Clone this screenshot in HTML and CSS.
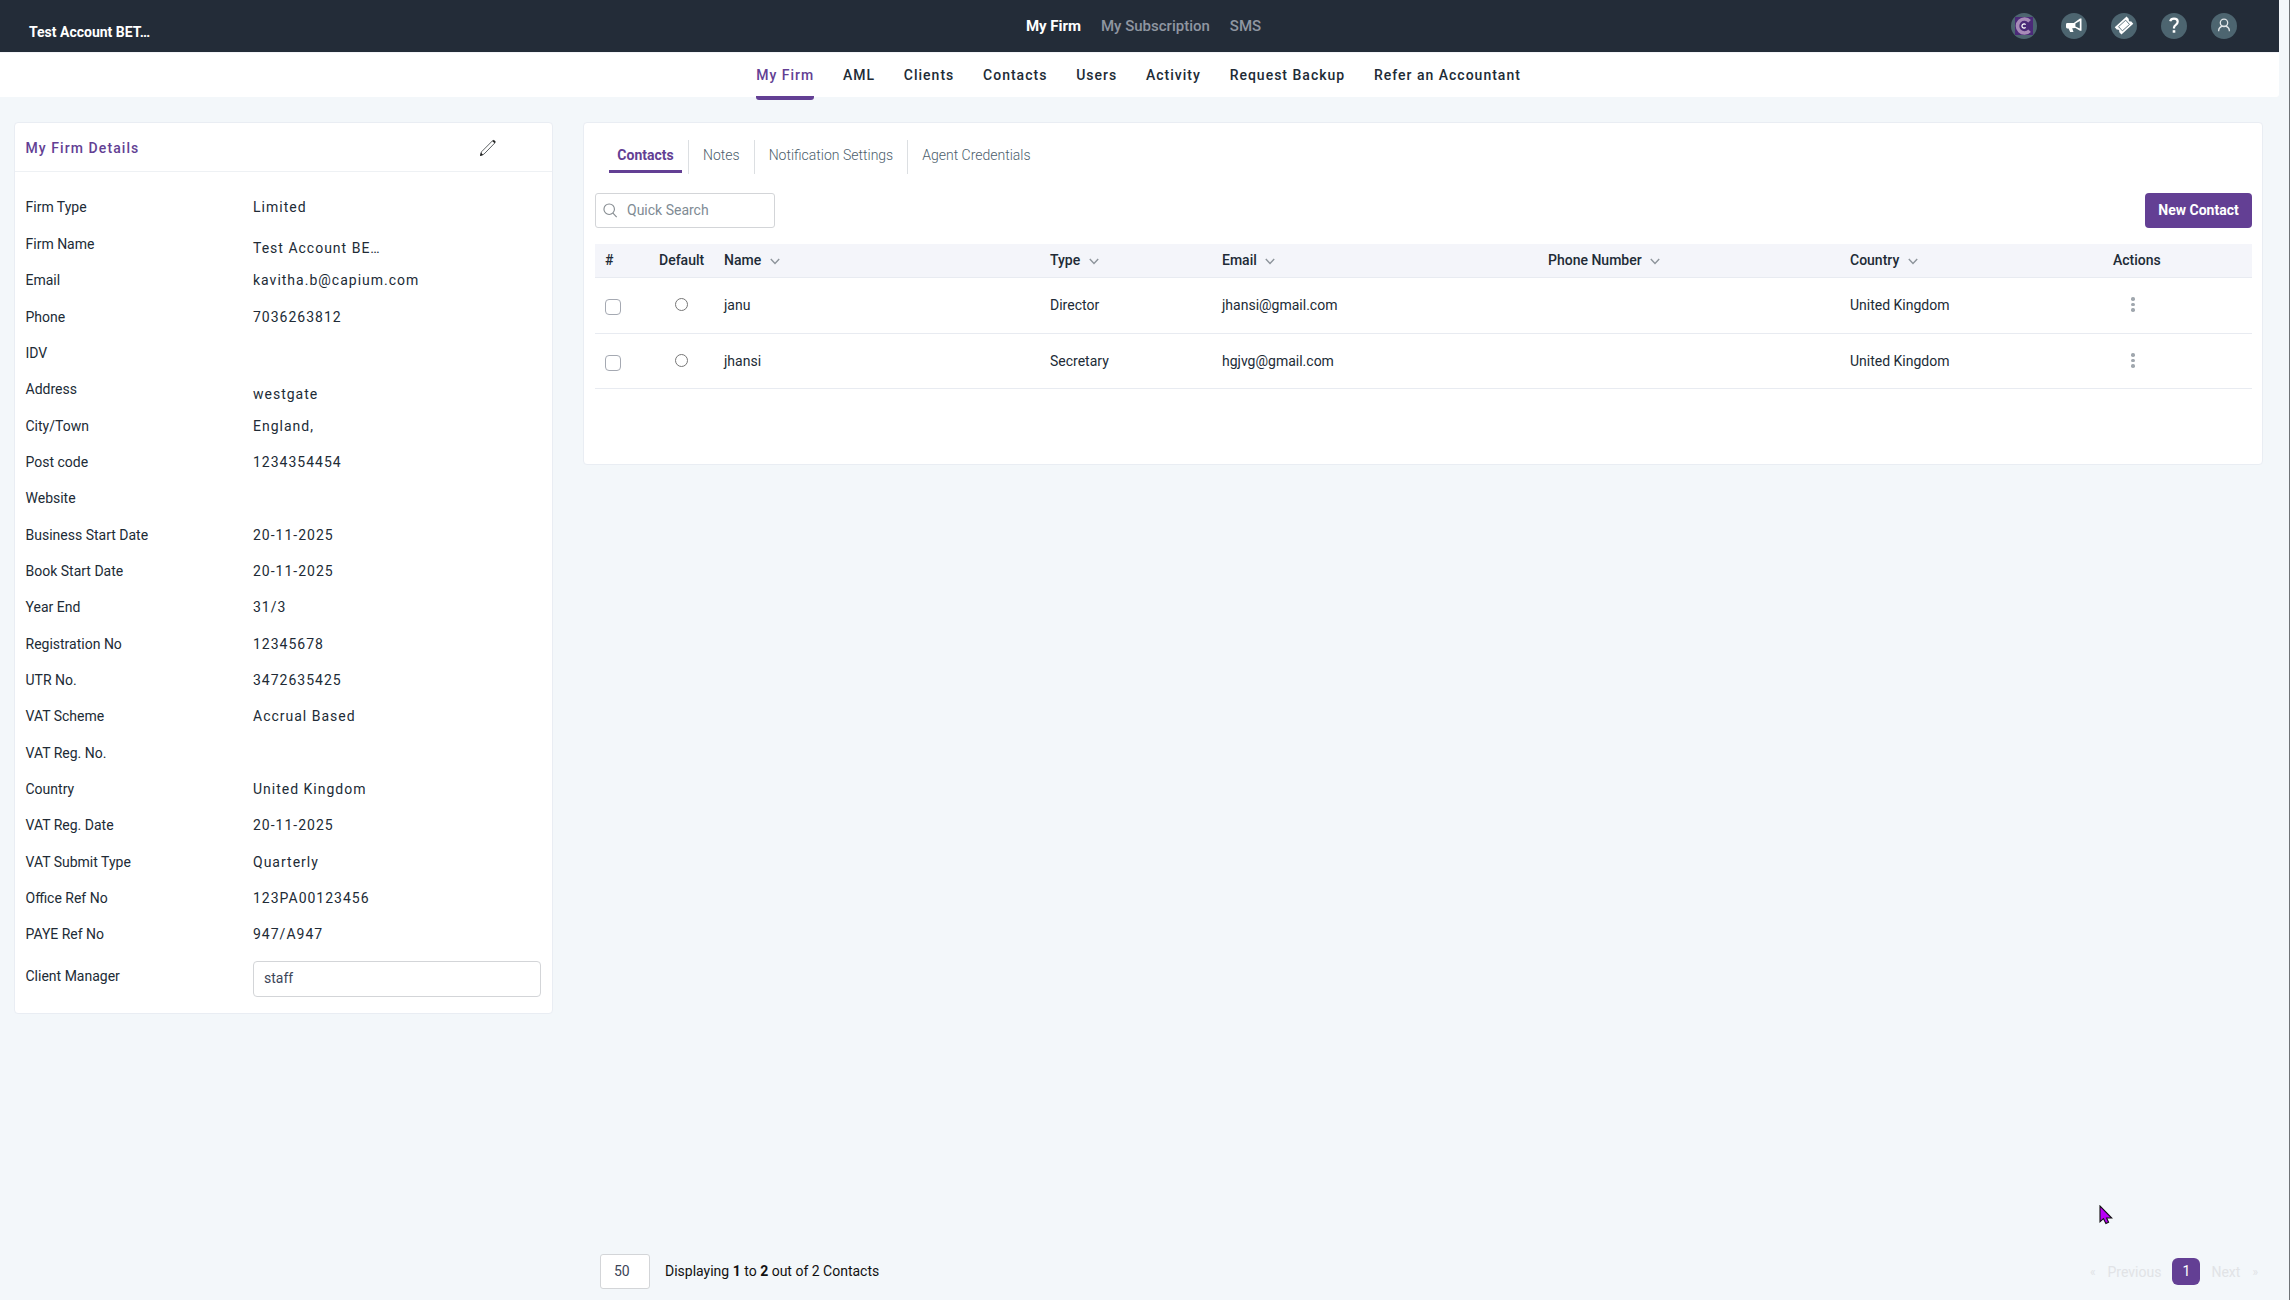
FILE: index.html
```
<!DOCTYPE html>
<html lang="en">
<head>
  <meta charset="UTF-8" />
  <meta name="viewport" content="width=device-width, initial-scale=1.0"/>
  <title>My Firm - Contacts</title>
  <link rel="stylesheet" href="styles.css">
</head>
<body>

<!-- Top bar -->
<div class="topbar">
  <div class="account">Test Account BET…</div>
  <div class="top-links">
    <a class="active">My Firm</a>
    <a>My Subscription</a>
    <a>SMS</a>
  </div>
  <div class="top-icons">
    <span class="icon">
      <svg viewBox="0 0 26 26"><rect x="4" y="4" width="18" height="18" fill="#4b2a78"/><path d="M18.6 8.2A7 7 0 1 0 18.6 17.8" fill="none" stroke="#a78bb8" stroke-width="3.6"/><path d="M14.6 11.6A2.1 2.1 0 1 0 14.6 14.4" fill="none" stroke="#fff" stroke-width="1.2"/></svg>
    </span>
    <span class="icon">
      <svg viewBox="0 0 26 26"><path fill="#fff" fill-rule="evenodd" d="M19 5.5h1.5v12.3H19l-4.6-2.7-3.2.2 1.3 3.8H9.1l-1.5-3.7H6.2q-1.2 0-1.2-1.3v-2.6q0-1.4 1.3-1.4h6.5zM18.8 8l-4.4 2.5v3l4.4 2.1z"/></svg>
    </span>
    <span class="icon">
      <svg viewBox="0 0 26 26"><g transform="rotate(-42 13 12.5)"><path fill="#fff" d="M5 7.5h16v3.4a1.7 1.7 0 0 0 0 3.2v3.4H5v-3.4A1.7 1.7 0 0 0 5 10.9z"/><rect x="8.2" y="9.7" width="9.6" height="5.7" fill="none" stroke="#4d6570" stroke-width=".8"/></g></svg>
    </span>
    <span class="icon">
      <svg viewBox="0 0 26 26"><path d="M9.2 8.3Q9.8 5.7 13 5.7q3.7 0 3.7 3.1 0 1.7-1.9 3-1.8 1.2-1.8 2.8v.8" fill="none" stroke="#fff" stroke-width="2.2"/><rect x="11.7" y="17.2" width="2.6" height="2.5" fill="#fff"/></svg>
    </span>
    <span class="icon">
      <svg viewBox="0 0 26 26"><g fill="none" stroke="#e2e6e8" stroke-width="1.3"><circle cx="13" cy="9.8" r="3.7"/><path d="M7.7 18.2v-1q0-2.5 3-3.9h4.6q3 1.4 3 3.9v1"/></g></svg>
    </span>
  </div>
</div>

<!-- Navbar -->
<div class="navbar">
  <a class="active">My Firm</a>
  <a>AML</a>
  <a>Clients</a>
  <a>Contacts</a>
  <a>Users</a>
  <a>Activity</a>
  <a>Request Backup</a>
  <a>Refer an Accountant</a>
</div>

<!-- Main Content -->
<div class="container">

  <div class="card details">
    <div class="details-header">
      <h2>My Firm Details</h2>
      <svg class="edit" viewBox="0 0 18 18"><path d="M1.5 16.5 2.5 12.8 13.6 1.7Q14.5 1 15.6 2q1 1 .3 1.9L4.9 15.2z" fill="#fff" stroke="#4b4f52" stroke-width=".9"/><path d="M1 17l.9-3.4 2.2 2.3zM13.2 2.1l1.1-.9q1.2 0 2.1 1.4l-.8 1.7z" fill="#222"/></svg>
    </div>
    <div class="details-body">
      <div class="row"><label>Firm Type</label><span>Limited</span></div>
      <div class="row"><label>Firm Name</label><span class="clipped">Test Account BE…</span></div>
      <div class="row"><label>Email</label><span>kavitha.b@capium.com</span></div>
      <div class="row"><label>Phone</label><span>7036263812</span></div>
      <div class="row"><label>IDV</label><span></span></div>
      <div class="row"><label>Address</label><span class="clipped">westgate</span></div>
      <div class="row"><label>City/Town</label><span>England,</span></div>
      <div class="row"><label>Post code</label><span>1234354454</span></div>
      <div class="row"><label>Website</label><span></span></div>
      <div class="row"><label>Business Start Date</label><span>20-11-2025</span></div>
      <div class="row"><label>Book Start Date</label><span>20-11-2025</span></div>
      <div class="row"><label>Year End</label><span>31/3</span></div>
      <div class="row"><label>Registration No</label><span>12345678</span></div>
      <div class="row"><label>UTR No.</label><span>3472635425</span></div>
      <div class="row"><label>VAT Scheme</label><span>Accrual Based</span></div>
      <div class="row"><label>VAT Reg. No.</label><span></span></div>
      <div class="row"><label>Country</label><span>United Kingdom</span></div>
      <div class="row"><label>VAT Reg. Date</label><span>20-11-2025</span></div>
      <div class="row"><label>VAT Submit Type</label><span>Quarterly</span></div>
      <div class="row"><label>Office Ref No</label><span>123PA00123456</span></div>
      <div class="row"><label>PAYE Ref No</label><span>947/A947</span></div>
      <div class="row manager"><label>Client Manager</label><div class="field">staff</div></div>
    </div>
  </div>

  <div class="main">
    <div class="card contacts">
      <div class="tabs">
        <a class="active">Contacts</a>
        <a>Notes</a>
        <a>Notification Settings</a>
        <a>Agent Credentials</a>
      </div>

      <div class="toolbar">
        <div class="search">
          <svg viewBox="0 0 16 16"><circle cx="6.6" cy="6.6" r="5.6"/><path d="M10.6 10.8 14.6 15"/></svg>
          Quick Search
        </div>
        <button>New Contact</button>
      </div>

      <div class="table">
        <div class="table-row table-head">
          <span>#</span>
          <span>Default</span>
          <span>Name <svg viewBox="0 0 10 7"><path d="M.8 1 5 5.5 9.2 1"/></svg></span>
          <span>Type <svg viewBox="0 0 10 7"><path d="M.8 1 5 5.5 9.2 1"/></svg></span>
          <span>Email <svg viewBox="0 0 10 7"><path d="M.8 1 5 5.5 9.2 1"/></svg></span>
          <span>Phone Number <svg viewBox="0 0 10 7"><path d="M.8 1 5 5.5 9.2 1"/></svg></span>
          <span>Country <svg viewBox="0 0 10 7"><path d="M.8 1 5 5.5 9.2 1"/></svg></span>
          <span>Actions</span>
        </div>
        <div class="table-row">
          <span><i class="checkbox"></i></span>
          <span><i class="radio"></i></span>
          <span>janu</span>
          <span>Director</span>
          <span>jhansi@gmail.com</span>
          <span></span>
          <span>United Kingdom</span>
          <span class="dots"><i></i><i></i><i></i></span>
        </div>
        <div class="table-row">
          <span><i class="checkbox"></i></span>
          <span><i class="radio"></i></span>
          <span>jhansi</span>
          <span>Secretary</span>
          <span>hgjvg@gmail.com</span>
          <span></span>
          <span>United Kingdom</span>
          <span class="dots"><i></i><i></i><i></i></span>
        </div>
      </div>
    </div>

    <!-- Pagination -->
    <div class="footer">
      <div class="page-size">50</div>
      <p>Displaying <b>1</b> to <b>2</b> out of 2 Contacts</p>
      <div class="pager">
        <span class="arrow">«</span>
        <span class="prev">Previous</span>
        <span class="current">1</span>
        <span class="next">Next</span>
        <span class="arrow">»</span>
      </div>
    </div>
  </div>
</div>

<svg class="pointer" viewBox="0 0 14 20"><path d="M1 1v15.8l3.4-3.2 2.5 5 2.7-1.3-2-4.3h5.2z" fill="#b800f5" stroke="#111" stroke-width="1.1"/></svg>

</body>
</html>
```

FILE: styles.css
```
* { box-sizing: border-box; margin: 0; padding: 0; }
body { font-family: Roboto, sans-serif; font-size: 14px; line-height: 20px; color: #212b36; background: #f3f7fa; width: 2290px; height: 1300px; padding-right: 10px; border-right: 1px solid #6f7377; overflow: hidden; display: flex; flex-direction: column; }

/* Top bar */
.topbar { height: 52px; flex: none; background: #232c38; display: grid; grid-template-columns: 1fr auto 1fr; padding: 0 42px 0 29px; }
.account { color: #fff; font-weight: bold; padding-top: 22px; }
.top-links { display: flex; gap: 20px; padding: 16px 0 0 21px; font-size: 15px; }
.top-links a { color: #8f96a1; font-weight: 500; }
.top-links a.active { color: #fff; font-weight: bold; }
.top-icons { display: flex; justify-content: flex-end; gap: 24px; padding-top: 13px; }
.icon { width: 26px; height: 26px; border-radius: 50%; background: #4d6570; }
.icon svg { display: block; width: 26px; height: 26px; }

/* Navbar */
.navbar { height: 45px; flex: none; background: #fff; display: flex; justify-content: center; gap: 28.8px; padding-right: 2px; border-top: 1px solid #f3f4f8; border-radius: 0 0 3px 0; }
.navbar a { height: 47px; padding-top: 12px; font-weight: 500; letter-spacing: 1px; }
.navbar a.active { color: #633f94; border-bottom: 4px solid #633f94; border-radius: 0 0 3px 3px; }

.container { flex: 1; display: flex; gap: 30px; padding: 25px 16px 0 14px; }
.card { background: #fff; border: 1px solid #e9edf3; border-radius: 4px; }

/* Firm details */
.details { width: 539px; height: 892px; }
.details-header { height: 49px; border-bottom: 1px solid #eef1f4; display: flex; justify-content: space-between; align-items: center; padding: 2px 55px 0 10.5px; }
.details-header h2 { font-size: 14px; font-weight: 500; letter-spacing: 1.08px; color: #633f94; }
.edit { width: 18px; height: 18px; }
.details-body { padding: 17.3px 10px 0 10.5px; }
.row { height: 36.35px; display: grid; grid-template-columns: 227.5px 288px; align-items: center; }
.row span { letter-spacing: 1px; }
.row .clipped { padding-top: 9px; }
.manager { height: 50px; }
.manager label { padding-bottom: 4px; }
.field { height: 36px; border: 1px solid #d3d5d8; border-radius: 4px; padding: 6px 10px; color: #3c4559; margin-top: 3px; }

/* Contacts */
.main { flex: 1; display: flex; flex-direction: column; }
.contacts { height: 343px; padding: 17px 10px 0 11px; }
.tabs { display: flex; height: 34px; margin-left: 14px; }
.tabs a { padding: 5px 14px 0; color: #637381; border-left: 1px solid #dcdfe2; }
.tabs a:not(.active) { font-weight: 300; color: #4c5e6c; }
.tabs a.active { width: 73px; height: 33px; margin-right: 6px; padding: 5px 0 0; text-align: center; color: #633f94; font-weight: bold; border-left: none; border-bottom: 3px solid #633f94; }
.toolbar { display: flex; justify-content: space-between; margin-top: 19px; }
.search { width: 180px; height: 35px; display: flex; align-items: center; gap: 9px; border: 1px solid #d3d5d8; border-radius: 3px; padding: 0 0 1px 7px; color: #808b94; }
.search svg { width: 15px; height: 15px; fill: none; stroke: #858b90; stroke-width: 1.2; }
.toolbar button { width: 107px; height: 35px; padding-bottom: 1px; font-family: inherit; font-size: 14px; font-weight: bold; color: #fff; background: #633f94; border: none; border-radius: 4px; }
.table { margin-top: 16px; }
.table-row { height: 55px; display: grid; grid-template-columns: 54px 65px 326px 172px 326px 302px 263px 1fr; align-items: center; padding: 0 0 1px 10px; border-bottom: 1px solid #e8ebf1; }
.table-head { height: 34px; background: #f4f5fa; font-weight: 500; }
.table-row:nth-child(2) { height: 56px; padding-bottom: 2px; }
.table-head svg { width: 10px; height: 7px; margin-left: 5px; fill: none; stroke: #8d949b; stroke-width: 1.4; }
.checkbox { display: block; width: 16px; height: 16px; margin-top: 4px; border: 1px solid #a5a9b2; border-radius: 4px; }
.radio { display: block; width: 13px; height: 13px; margin-left: 16px; border: 1px solid #767676; border-radius: 50%; }
.dots { display: flex; flex-direction: column; gap: 2px; padding-left: 18px; }
.dots i { width: 3.5px; height: 3.5px; border-radius: 50%; background: #a0a7ae; }

/* Footer */
.footer { margin-top: auto; height: 46px; display: flex; padding: 0 5px 0 17px; }
.page-size { width: 50px; height: 35px; margin-right: 15px; padding: 6px 13px; background: #fff; border: 1px solid #d3d5d8; border-radius: 3px; color: #3c4559; }
.footer p { padding-top: 7px; color: #111; }
.pager { margin-left: auto; display: flex; height: 35px; align-items: center; color: #e1e3e6; }
.prev { margin: 0 11px 0 12px; }
.next { margin: 0 12px 0 11px; }
.arrow { font-size: 12px; }
.current { width: 28px; height: 27px; line-height: 27px; text-align: center; color: #fff; background: #633f94; border-radius: 6px; }

.pointer { position: absolute; left: 2099px; top: 1205px; width: 14px; height: 20px; }
```
